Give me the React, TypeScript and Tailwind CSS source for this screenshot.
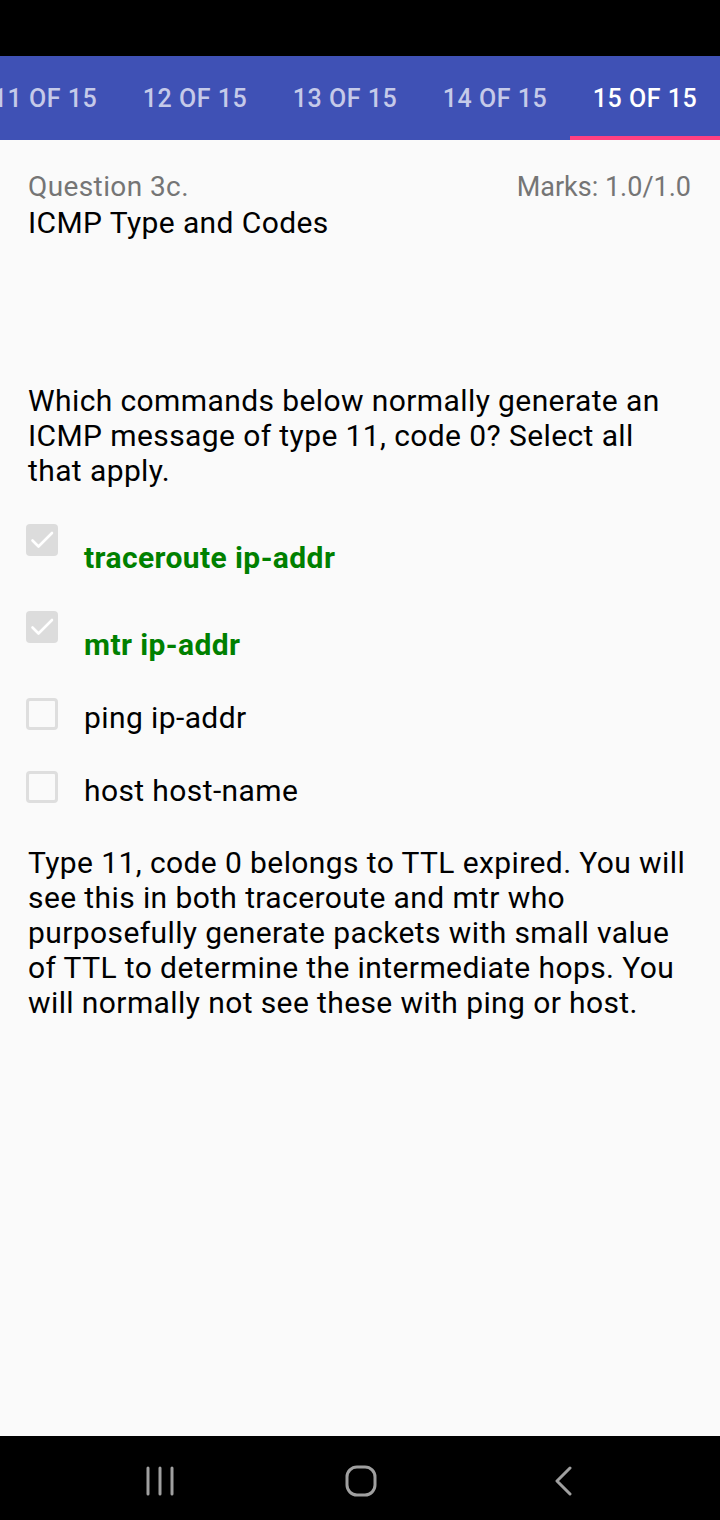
import React from "react";

const tabs = ["11 OF 15", "12 OF 15", "13 OF 15", "14 OF 15", "15 OF 15"];

function CheckBox({ checked }: { checked: boolean }) {
  if (checked) {
    return (
      <div className="w-[32px] h-[32px] rounded-[4px] bg-[#dcdcdc] flex items-center justify-center shrink-0">
        <svg width="28" height="28" viewBox="0 0 28 28" fill="none">
          <path d="M4.5 14.5l6 6L24 7" stroke="#ffffff" strokeWidth="2.6" strokeLinecap="round" strokeLinejoin="round" />
        </svg>
      </div>
    );
  }
  return <div className="w-[32px] h-[32px] rounded-[4px] border-[3px] border-[#dedede] shrink-0" />;
}

const options = [
  { text: "traceroute ip-addr", checked: true, h: "h-[87px]" },
  { text: "mtr ip-addr", checked: true, h: "h-[87px]" },
  { text: "ping ip-addr", checked: false, h: "h-[73px]" },
  { text: "host host-name", checked: false, h: "h-[73px]" },
];

export default function App() {
  return (
    <div className="w-[720px] h-[1520px] bg-[#fafafa] flex flex-col overflow-hidden" style={{ fontFamily: "Roboto, 'Noto Sans', sans-serif" }}>
      <div className="h-[56px] bg-black shrink-0" />
      <div className="h-[84px] bg-[#3f51b5] overflow-hidden shrink-0 relative">
        <div className="flex ml-[-30px] h-full">
          {tabs.map((t, i) => {
            const sel = i === tabs.length - 1;
            return (
              <div key={t} className="w-[150px] shrink-0 h-full flex items-center justify-center relative pt-[2px]">
                <span className={`text-[25px] font-medium tracking-[0.5px] whitespace-nowrap ${sel ? "text-white" : "text-[#c5cae9]"}`}>{t}</span>
                {sel && <div className="absolute left-0 right-0 bottom-0 h-[4px] bg-[#ff4081]" />}
              </div>
            );
          })}
        </div>
      </div>
      <div className="flex-1 px-[28px] pt-[170px] tracking-[0.4px]">
        <div className="flex justify-between items-baseline leading-[35px] text-[#757575] mt-[-141px]">
          <span className="text-[28px]">Question 3c.</span>
          <span className="mr-[1px] tracking-[0px] text-[27px]">Marks: 1.0/1.0</span>
        </div>
        <div className="text-[30px] leading-[35px] text-black">ICMP Type and Codes</div>
        <div className="mt-[143px] text-[30px] leading-[35px] text-black">
          Which commands below normally generate an ICMP message of type 11, code 0? Select all that apply.
        </div>
        <div className="mt-[36px] ml-[-2px]">
          {options.map((o) => (
            <div key={o.text} className={`flex items-start ${o.h}`}>
              <CheckBox checked={o.checked} />
              <span
                className={`ml-[26px] text-[30px] leading-[35px] ${o.checked ? "font-bold text-[#008000] mt-[16px]" : "text-black mt-[2px]"}`}
              >
                {o.text}
              </span>
            </div>
          ))}
        </div>
        <div className="mt-[1px] text-[30px] leading-[35px] text-black">
          Type 11, code 0 belongs to TTL expired. You will see this in both traceroute and mtr who purposefully generate packets with small value of TTL to determine the intermediate hops. You will normally not see these with ping or host.
        </div>
      </div>
      <div className="h-[84px] bg-black shrink-0 flex items-center">
        <div className="w-[720px] relative h-full">
          <svg className="absolute left-[145px] top-[30px]" width="30" height="30" viewBox="0 0 30 30">
            <path d="M3 2v26M15 2v26M27 2v26" stroke="#a0a0a0" strokeWidth="3" strokeLinecap="round" />
          </svg>
          <svg className="absolute left-[344px] top-[28px]" width="34" height="34" viewBox="0 0 34 34">
            <rect x="3" y="3" width="28" height="28" rx="10" fill="none" stroke="#a0a0a0" strokeWidth="3" />
          </svg>
          <svg className="absolute left-[552px] top-[30px]" width="22" height="30" viewBox="0 0 22 30">
            <path d="M18 2L5 15l13 13" fill="none" stroke="#a0a0a0" strokeWidth="3" strokeLinecap="round" strokeLinejoin="round" />
          </svg>
        </div>
      </div>
    </div>
  );
}
